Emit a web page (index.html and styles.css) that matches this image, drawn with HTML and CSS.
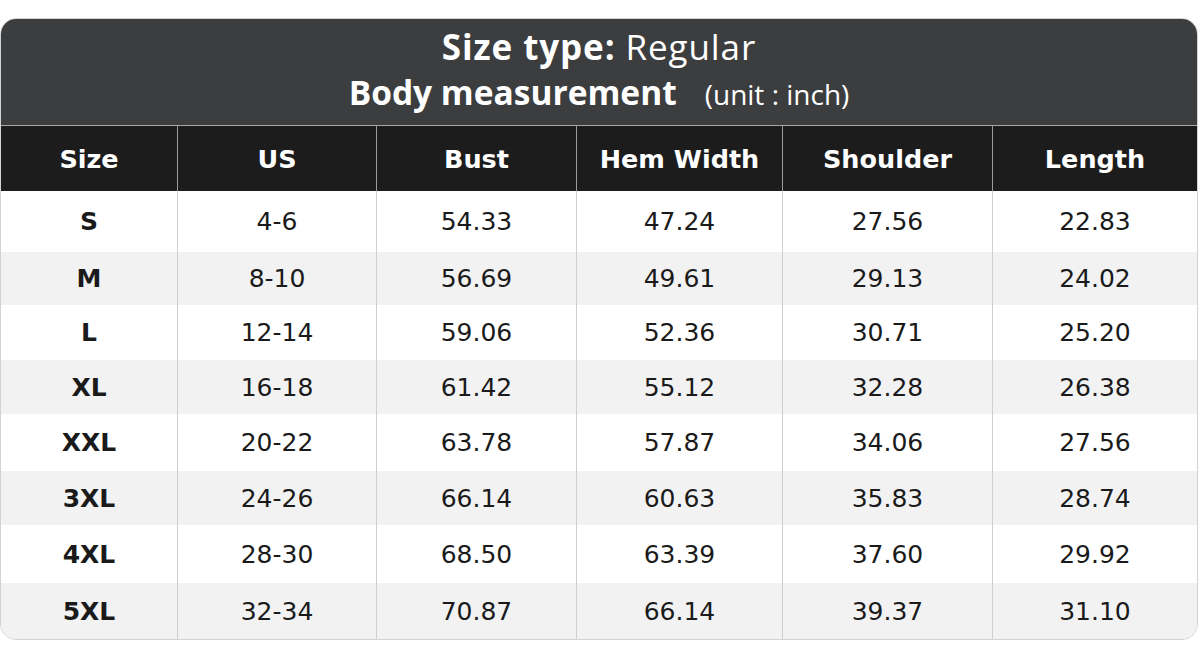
FILE: index.html
```html
<!DOCTYPE html>
<html>
<head>
<meta charset="utf-8">
<link rel="stylesheet" href="styles.css">
</head>
<body>
<div class="card">
  <div class="band">
    <div class="line1"><b>Size type:</b> Regular</div>
    <div class="line2"><b>Body measurement</b><span class="unit">(unit : inch)</span></div>
  </div>
  <div class="grid head">
    <div>Size</div><div>US</div><div>Bust</div><div>Hem Width</div><div>Shoulder</div><div>Length</div>
  </div>
  <div class="grid row r1"><div class="sz">S</div><div>4-6</div><div>54.33</div><div>47.24</div><div>27.56</div><div>22.83</div></div>
  <div class="grid row alt r2"><div class="sz">M</div><div>8-10</div><div>56.69</div><div>49.61</div><div>29.13</div><div>24.02</div></div>
  <div class="grid row r3"><div class="sz">L</div><div>12-14</div><div>59.06</div><div>52.36</div><div>30.71</div><div>25.20</div></div>
  <div class="grid row alt r4"><div class="sz">XL</div><div>16-18</div><div>61.42</div><div>55.12</div><div>32.28</div><div>26.38</div></div>
  <div class="grid row r5"><div class="sz">XXL</div><div>20-22</div><div>63.78</div><div>57.87</div><div>34.06</div><div>27.56</div></div>
  <div class="grid row alt r6"><div class="sz">3XL</div><div>24-26</div><div>66.14</div><div>60.63</div><div>35.83</div><div>28.74</div></div>
  <div class="grid row r7"><div class="sz">4XL</div><div>28-30</div><div>68.50</div><div>63.39</div><div>37.60</div><div>29.92</div></div>
  <div class="grid row alt r8"><div class="sz">5XL</div><div>32-34</div><div>70.87</div><div>66.14</div><div>39.37</div><div>31.10</div></div>
</div>
</body>
</html>
```

FILE: styles.css
```css
html, body {
  margin: 0;
  padding: 0;
  background: #ffffff;
}
body {
  padding-top: 18px;
  font-family: "DejaVu Sans", sans-serif;
}
.card {
  width: 1198px;
  box-sizing: border-box;
  border: 1px solid #d2d2d4;
  border-radius: 16px;
  overflow: hidden;
  background: #ffffff;
}
.band {
  background: #3c3d3f;
  color: #ffffff;
  height: 106px;
  box-sizing: border-box;
  padding-top: 6px;
  font-family: "Open Sans", sans-serif;
  text-align: center;
}
.line1 {
  font-size: 35px;
  line-height: 44px;
  letter-spacing: 0.9px;
}
.line2 {
  font-size: 33.5px;
  line-height: 47px;
}
.line1 b, .line2 b {
  font-weight: 700;
}
.unit {
  font-size: 28px;
  margin-left: 28px;
}
.grid {
  display: grid;
  grid-template-columns: 176px 199px 200px 206px 210px 1fr;
}
.grid > div {
  display: flex;
  align-items: center;
  justify-content: center;
}
.grid > div + div {
  border-left: 1px solid #cfcfd1;
}
.head {
  background: #1c1c1c;
  color: #ffffff;
  height: 66px;
  border-top: 1px solid #a8a8a8;
  box-sizing: border-box;
  font-weight: 700;
  font-size: 25.5px;
}
.head > div + div {
  border-left: 1px solid #9a9a9a;
}
.row {
  height: 56px;
  font-size: 25px;
  color: #1a1a1a;
  background: #ffffff;
}
.row.alt {
  background: #f2f2f3;
}
.row .sz {
  font-weight: 700;
}
.r1 { height: 61px; }
.r2 { height: 53px; }
.r3 { height: 55px; }
.r4 { height: 54px; }
.r5 { height: 57px; }
.r6 { height: 54px; }
.r7 { height: 58px; }
.r8 { height: 56px; }
```
